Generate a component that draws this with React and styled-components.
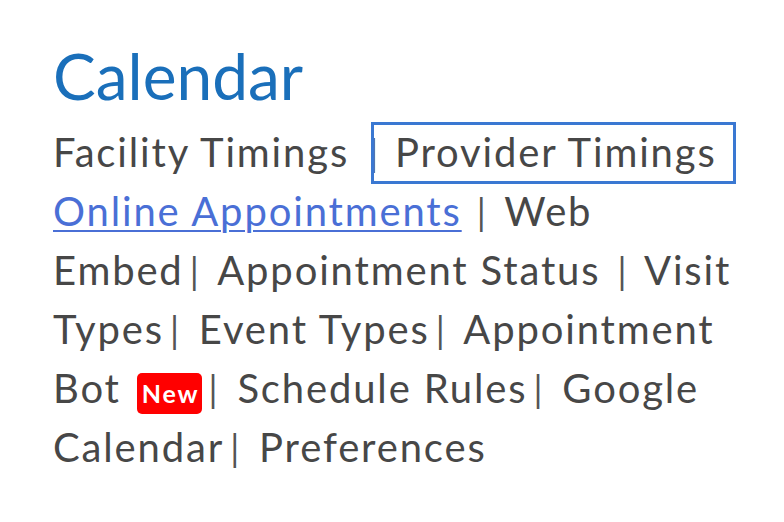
import React from "react";
import styled, { createGlobalStyle } from "styled-components";

const GlobalStyle = createGlobalStyle`
    html, body {
        margin: 0;
        padding: 0;
        background: #ffffff;
    }
`;

const Page = styled.div`
    padding: 28px 0 0 53px;
    width: 685px;
    font-family: "Lato", "Liberation Sans", sans-serif;
`;

const Title = styled.h1`
    margin: 0;
    font-size: 64px;
    font-weight: 400;
    line-height: 95px;
    color: #1a6fba;
`;

const Nav = styled.div`
    font-size: 40px;
    line-height: 59px;
    letter-spacing: 1.85px;
    color: #474747;
`;

const Item = styled.a`
    color: ${(p) => (p.$active ? "#4a6fd6" : "#474747")};
    text-decoration: ${(p) => (p.$active ? "underline" : "none")};
    text-decoration-thickness: 2px;
    text-underline-offset: 4px;
    cursor: pointer;
`;

const Focused = styled.a`
    color: #474747;
    text-decoration: none;
    border: 3px solid #3a78d2;
    padding: 3px 16px 5px 21px;
    margin-left: -9px;
    cursor: pointer;
`;

const Sep = styled.span`
    font-size: 36px;
    line-height: 0;
    color: #555;
    margin-left: ${(p) => p.$l}px;
    margin-right: ${(p) => p.$r}px;
`;

const Badge = styled.span`
    display: inline-block;
    background: #ff0000;
    color: #ffffff;
    font-size: 25px;
    font-weight: 700;
    line-height: 41px;
    padding: 0 3px 0 5px;
    border-radius: 5px;
    margin-left: 16px;
`;

export default function App() {
    return (
        <Page>
            <GlobalStyle />
            <Title>Calendar</Title>
            <Nav>
                <Item>Facility Timings</Item>
                <Sep $l={20} $r={0}>|</Sep>
                <Focused>Provider Timings</Focused>{" "}
                <Item $active>Online Appointments</Item>
                <Sep $l={15} $r={5}>|</Sep> <Item>Web Embed</Item>
                <Sep $l={6} $r={6}>|</Sep> <Item>Appointment Status</Item>
                <Sep $l={17} $r={5}>|</Sep> <Item>Visit Types</Item>
                <Sep $l={6} $r={6}>|</Sep> <Item>Event Types</Item>
                <Sep $l={6} $r={6}>|</Sep> <Item>Appointment Bot</Item>
                <Badge>New</Badge>
                <Sep $l={6} $r={6}>|</Sep> <Item>Schedule Rules</Item>
                <Sep $l={6} $r={6}>|</Sep> <Item>Google Calendar</Item>
                <Sep $l={6} $r={6}>|</Sep> <Item>Preferences</Item>
            </Nav>
        </Page>
    );
}
